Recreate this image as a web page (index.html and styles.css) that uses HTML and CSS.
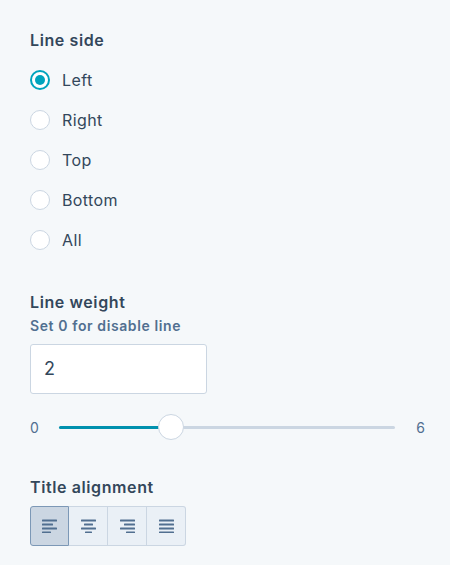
FILE: index.html
```html
<!DOCTYPE html>
<html>
<head>
<meta charset="utf-8">
<link rel="stylesheet" href="styles.css">
</head>
<body>
<div class="panel">
  <section class="field">
    <h3 class="label">Line side</h3>
    <div class="radios">
      <label class="radio checked"><span class="dot"></span><span>Left</span></label>
      <label class="radio"><span class="dot"></span><span>Right</span></label>
      <label class="radio"><span class="dot"></span><span>Top</span></label>
      <label class="radio"><span class="dot"></span><span>Bottom</span></label>
      <label class="radio"><span class="dot"></span><span>All</span></label>
    </div>
  </section>

  <section class="field weight">
    <h3 class="label">Line weight</h3>
    <div class="help">Set 0 for disable line</div>
    <div class="input">2</div>
    <div class="slider">
      <span class="end">0</span>
      <div class="track">
        <div class="fill" style="width:33.33%"></div>
        <div class="thumb" style="left:33.33%"></div>
      </div>
      <span class="end">6</span>
    </div>
  </section>

  <section class="field align">
    <h3 class="label">Title alignment</h3>
    <div class="btngroup">
      <button class="btn active" aria-label="Left">
        <svg width="15" height="14" viewBox="0 0 15 14"><g fill="#516f90"><rect x="0" y="0.5" width="15" height="2" rx="0.5"/><rect x="0" y="4.5" width="11" height="2" rx="0.5"/><rect x="0" y="8.5" width="15" height="2" rx="0.5"/><rect x="0" y="12.5" width="9" height="2" rx="0.5"/></g></svg>
      </button>
      <button class="btn" aria-label="Center">
        <svg width="15" height="14" viewBox="0 0 15 14"><g fill="#516f90"><rect x="0" y="0.5" width="15" height="2" rx="0.5"/><rect x="3" y="4.5" width="9" height="2" rx="0.5"/><rect x="0" y="8.5" width="15" height="2" rx="0.5"/><rect x="4" y="12.5" width="7" height="2" rx="0.5"/></g></svg>
      </button>
      <button class="btn" aria-label="Right">
        <svg width="15" height="14" viewBox="0 0 15 14"><g fill="#516f90"><rect x="0" y="0.5" width="15" height="2" rx="0.5"/><rect x="4" y="4.5" width="11" height="2" rx="0.5"/><rect x="0" y="8.5" width="15" height="2" rx="0.5"/><rect x="6" y="12.5" width="9" height="2" rx="0.5"/></g></svg>
      </button>
      <button class="btn" aria-label="Justify">
        <svg width="15" height="14" viewBox="0 0 15 14"><g fill="#516f90"><rect x="0" y="0.5" width="15" height="2" rx="0.5"/><rect x="0" y="4.5" width="15" height="2" rx="0.5"/><rect x="0" y="8.5" width="15" height="2" rx="0.5"/><rect x="0" y="12.5" width="15" height="2" rx="0.5"/></g></svg>
      </button>
    </div>
  </section>
</div>
</body>
</html>
```
FILE: styles.css
```css
html, body {
  margin: 0;
  padding: 0;
  background: #f5f8fa;
}
body {
  font-family: "Inter", "Lato", "Liberation Sans", sans-serif;
  color: #33475b;
  width: 450px;
  height: 565px;
  overflow: hidden;
}
.panel {
  padding: 28px 30px 0 30px;
}
.label {
  margin: 0;
  font-size: 16px;
  font-weight: 600;
  line-height: 24px;
  color: #33475b;
  letter-spacing: 0.6px;
}
.radios {
  display: flex;
  flex-direction: column;
  margin-top: 8px;
}
.radio {
  display: flex;
  align-items: center;
  gap: 12px;
  height: 40px;
  font-size: 16px;
  color: #33475b;
  letter-spacing: 0.4px;
}
.dot {
  box-sizing: border-box;
  width: 20px;
  height: 20px;
  border-radius: 50%;
  border: 1px solid #cbd6e2;
  background: #fff;
  position: relative;
  flex: none;
}
.radio.checked .dot {
  border: 2px solid #00a4bd;
}
.radio.checked .dot::after {
  content: "";
  position: absolute;
  left: 3px;
  top: 3px;
  width: 10px;
  height: 10px;
  border-radius: 50%;
  background: #00a4bd;
}
.weight {
  margin-top: 30px;
}
.help {
  font-size: 14px;
  font-weight: 600;
  color: #516f90;
  line-height: 20px;
  margin-top: 2px;
  letter-spacing: 0.6px;
}
.input {
  box-sizing: border-box;
  width: 177px;
  height: 50px;
  margin-top: 8px;
  background: #fff;
  border: 1px solid #cbd6e2;
  border-radius: 3px;
  padding: 0 13px;
  font-size: 18px;
  line-height: 48px;
  color: #33475b;
}
.slider {
  display: flex;
  align-items: center;
  height: 32px;
  margin-top: 17px;
  width: 395px;
}
.end {
  font-size: 14px;
  color: #516f90;
  width: 29px;
  flex: none;
}
.end:last-child {
  text-align: right;
  width: 30px;
}
.track {
  position: relative;
  flex: none;
  width: 336px;
  height: 3px;
  background: #cbd6e2;
  border-radius: 2px;
}
.fill {
  position: absolute;
  left: 0;
  top: 0;
  height: 3px;
  background: #0091ae;
  border-radius: 2px;
}
.thumb {
  position: absolute;
  top: -12px;
  width: 26px;
  height: 26px;
  margin-left: -13px;
  box-sizing: border-box;
  background: #fff;
  border: 1px solid #cbd6e2;
  border-radius: 50%;
}
.align {
  margin-top: 32px;
}
.btngroup {
  display: flex;
  margin-top: 7px;
  width: 156px;
}
.btn {
  box-sizing: border-box;
  width: 39px;
  height: 40px;
  background: #eaf0f6;
  border: 1px solid #cbd6e2;
  border-left-width: 0;
  display: flex;
  align-items: center;
  justify-content: center;
  padding: 0;
}
.btn:first-child {
  border-left-width: 1px;
  border-radius: 3px 0 0 3px;
}
.btn:last-child {
  border-radius: 0 3px 3px 0;
}
.btn.active {
  background: #cbd6e2;
  border-color: #7c98b6;
}
```
